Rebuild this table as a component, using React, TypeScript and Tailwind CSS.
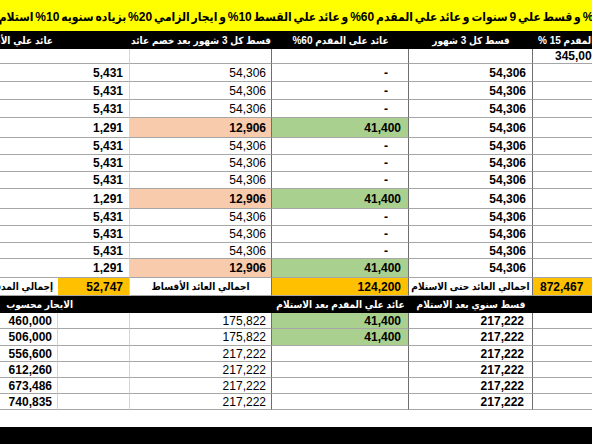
import React from 'react';

type TopRow = { h: string; s: boolean };
const topRows: TopRow[] = [
  { h: 'h-[18px]', s: false },
  { h: 'h-[18px]', s: false },
  { h: 'h-[18px]', s: false },
  { h: 'h-[20px]', s: true },
  { h: 'h-[17px]', s: false },
  { h: 'h-[17px]', s: false },
  { h: 'h-[17px]', s: false },
  { h: 'h-[20px]', s: true },
  { h: 'h-[17px]', s: false },
  { h: 'h-[17px]', s: false },
  { h: 'h-[16px]', s: false },
  { h: 'h-[19px]', s: true },
];

type BottomRow = { h: string; a: string; c: string; g: boolean };
const bottomRows: BottomRow[] = [
  { h: 'h-[16px]', a: '460,000', c: '175,822', g: true },
  { h: 'h-[17px]', a: '506,000', c: '175,822', g: true },
  { h: 'h-[16px]', a: '556,600', c: '217,222', g: false },
  { h: 'h-[16px]', a: '612,260', c: '217,222', g: false },
  { h: 'h-[16px]', a: '673,486', c: '217,222', g: false },
  { h: 'h-[16px]', a: '740,835', c: '217,222', g: false },
];

const cell = 'flex items-center overflow-hidden whitespace-nowrap border-b border-[#a6a6a6]';
const lightR = 'border-r border-r-[#d4d4d4]';
const darkR = 'border-r border-r-[#6e6e6e]';
const hdr = 'flex items-center overflow-hidden whitespace-nowrap bg-black text-white font-bold';

function Ar({ children }: { children: React.ReactNode }) {
  return (
    <span dir="rtl" className="shrink-0 text-[10px] font-['Liberation_Sans','DejaVu_Sans_Condensed','DejaVu_Sans',sans-serif]">
      {children}
    </span>
  );
}

export default function App() {
  return (
    <div className="w-[592px] h-[444px] overflow-hidden bg-white text-black text-[12px] font-['Liberation_Sans','DejaVu_Sans_Condensed','DejaVu_Sans',sans-serif]">
      <div className="h-[31px] bg-[#ffff00] flex items-center justify-center overflow-hidden whitespace-nowrap">
        <span dir="rtl" className="shrink-0 text-[12px] font-bold pt-[3px] [word-spacing:-1.5px]">
          % و قسط علي 9 سنوات و عائد علي المقدم 60% و عائد علي القسط 10% و ايجار الزامي 20% بزياده سنويه 10% استلام
        </span>
      </div>

      <div className="grid grid-cols-[58px_72px_142px_137px_124px_59px]">
        {/* header */}
        <div className={`${hdr} h-[18px] justify-end pr-[5px]`}><Ar>عائد علي الأقساط</Ar></div>
        <div className={`${hdr} h-[18px]`}></div>
        <div className={`${hdr} h-[18px] justify-center`}><Ar>قسط كل 3 شهور بعد خصم عائد</Ar></div>
        <div className={`${hdr} h-[18px] justify-center`}><Ar>عائد على المقدم 60%</Ar></div>
        <div className={`${hdr} h-[18px] justify-center`}><Ar>قسط كل 3 شهور</Ar></div>
        <div className={`${hdr} h-[18px] justify-start pl-[5px]`}><Ar>المقدم 15 %</Ar></div>

        {/* row 0 */}
        <div className={`${cell} h-[15px]`}></div>
        <div className={`${cell} h-[15px] ${lightR}`}></div>
        <div className={`${cell} h-[15px] ${darkR}`}></div>
        <div className={`${cell} h-[15px] ${darkR}`}></div>
        <div className={`${cell} h-[15px] ${darkR}`}></div>
        <div className={`${cell} h-[15px] justify-start pl-[22px] font-bold`}>345,000</div>

        {topRows.map((r, i) => (
          <React.Fragment key={i}>
            <div className={`${cell} ${r.h}`}></div>
            <div className={`${cell} ${r.h} ${lightR} justify-end pr-[6px] font-bold`}>{r.s ? '1,291' : '5,431'}</div>
            <div className={`${cell} ${r.h} ${darkR} justify-end pr-[5px] ${r.s ? 'bg-[#f8cbad] font-bold' : ''}`}>{r.s ? '12,906' : '54,306'}</div>
            <div className={`${cell} ${r.h} ${darkR} justify-end font-bold ${r.s ? 'bg-[#a9d08e] pr-[7px]' : 'pr-[20px]'}`}>{r.s ? '41,400' : '-'}</div>
            <div className={`${cell} ${r.h} ${darkR} justify-end pr-[6px] font-bold`}>54,306</div>
            <div className={`${cell} ${r.h}`}></div>
          </React.Fragment>
        ))}

        {/* totals */}
        <div className={`${cell} h-[18px] justify-end pr-[5px] font-bold`}><Ar>إجمالي المدفوعات</Ar></div>
        <div className={`${cell} h-[18px] ${lightR} justify-end pr-[6px] font-bold bg-[#ffc000]`}>52,747</div>
        <div className={`${cell} h-[18px] ${darkR} justify-center font-bold`}><Ar>اجمالي العائد الأقساط</Ar></div>
        <div className={`${cell} h-[18px] ${darkR} justify-end pr-[7px] font-bold bg-[#ffc000]`}>124,200</div>
        <div className={`${cell} h-[18px] ${darkR} justify-center font-bold`}><Ar>اجمالي العائد حتى الاستلام</Ar></div>
        <div className={`${cell} h-[18px] justify-start pl-[7px] font-bold bg-[#ffc000]`}>872,467</div>

        {/* bottom header */}
        <div className={`${hdr} h-[17px] col-span-2 justify-end pr-[57px]`}><Ar>الايجار محسوب</Ar></div>
        <div className={`${hdr} h-[17px]`}></div>
        <div className={`${hdr} h-[17px] justify-center`}><Ar>عائد علي المقدم بعد الاستلام</Ar></div>
        <div className={`${hdr} h-[17px] justify-center`}><Ar>قسط سنوي بعد الاستلام</Ar></div>
        <div className={`${hdr} h-[17px]`}></div>

        {bottomRows.map((r, i) => (
          <React.Fragment key={i}>
            <div className={`${cell} ${r.h} ${lightR} justify-end pr-[5px] font-bold`}>{r.a}</div>
            <div className={`${cell} ${r.h} ${lightR}`}></div>
            <div className={`${cell} ${r.h} ${darkR} justify-end pr-[5px]`}>{r.c}</div>
            <div className={`${cell} ${r.h} ${darkR} justify-end pr-[7px] font-bold ${r.g ? 'bg-[#a9d08e]' : ''}`}>{r.g ? '41,400' : ''}</div>
            <div className={`${cell} ${r.h} ${darkR} justify-end pr-[8px] font-bold`}>217,222</div>
            <div className={`${cell} ${r.h}`}></div>
          </React.Fragment>
        ))}
      </div>

      <div className="h-[17px] bg-white"></div>
      <div className="h-[17px] bg-black"></div>
    </div>
  );
}
